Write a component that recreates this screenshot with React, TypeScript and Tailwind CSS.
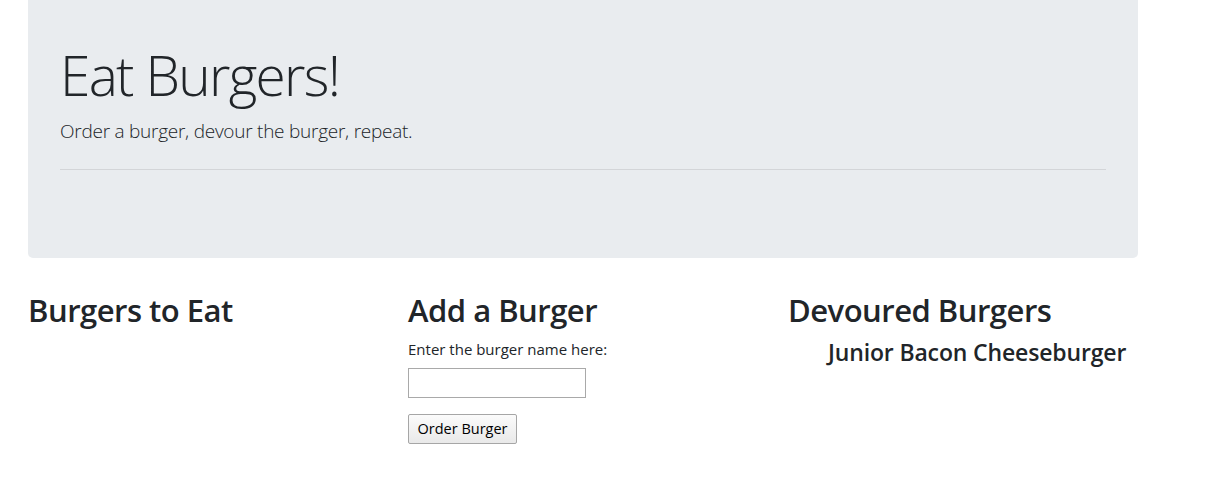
export default function App() {
  const devoured = ["Junior Bacon Cheeseburger"];

  return (
    <div className="w-[1211px] min-h-[484px] bg-white text-[#212529] font-['Open_Sans',sans-serif]">
      {/* Jumbotron */}
      <div className="ml-[28px] w-[1110px] h-[258px] bg-[#e9ecef] rounded-b-[5px] px-8 pt-[42px]">
        <h1 className="text-[55px] leading-[1.2] font-light tracking-[-1.7px] mb-2">Eat Burgers!</h1>
        <p className="text-[19px] leading-[1.5] font-light tracking-[-0.25px] pt-[1px]">
          Order a burger, devour the burger, repeat.
        </p>
        <hr className="mt-[23px] border-t border-[#d3d5d8]" />
      </div>

      {/* Columns */}
      <div className="ml-[13px] mt-8 grid grid-cols-[380px_380px_380px]">
        <div className="px-[15px]">
          <h2 className="text-[31px] leading-[1.2] font-semibold tracking-[-0.5px] pt-[2px] mb-2">
            Burgers to Eat
          </h2>
        </div>

        <div className="px-[15px]">
          <h2 className="text-[31px] leading-[1.2] font-semibold tracking-[-0.5px] pt-[2px] mb-2">
            Add a Burger
          </h2>
          <form className="flex flex-col items-start">
            <label htmlFor="burger" className="text-[15px] leading-6 mb-[7px]">
              Enter the burger name here:
            </label>
            <input
              id="burger"
              type="text"
              className="w-[178px] h-[30px] border border-[#a9a9a9] bg-white px-1 text-[13px]"
            />
            <button
              type="button"
              className="mt-4 w-[109px] h-[30px] border border-[#a6a6a6] rounded-[2px] bg-gradient-to-b from-[#fbfbfb] to-[#e9e9e9] text-[14.5px] text-black"
            >
              Order Burger
            </button>
          </form>
        </div>

        <div className="px-[15px]">
          <h2 className="text-[31px] leading-[1.2] font-semibold tracking-[-0.5px] pt-[2px] mb-2">
            Devoured Burgers
          </h2>
          <ul className="pl-10">
            {devoured.map((b) => (
              <li key={b}>
                <h4 className="text-[23px] leading-[1.2] font-semibold tracking-[-0.15px] whitespace-nowrap pt-[2px]">
                  {b}
                </h4>
              </li>
            ))}
          </ul>
        </div>
      </div>
    </div>
  );
}
